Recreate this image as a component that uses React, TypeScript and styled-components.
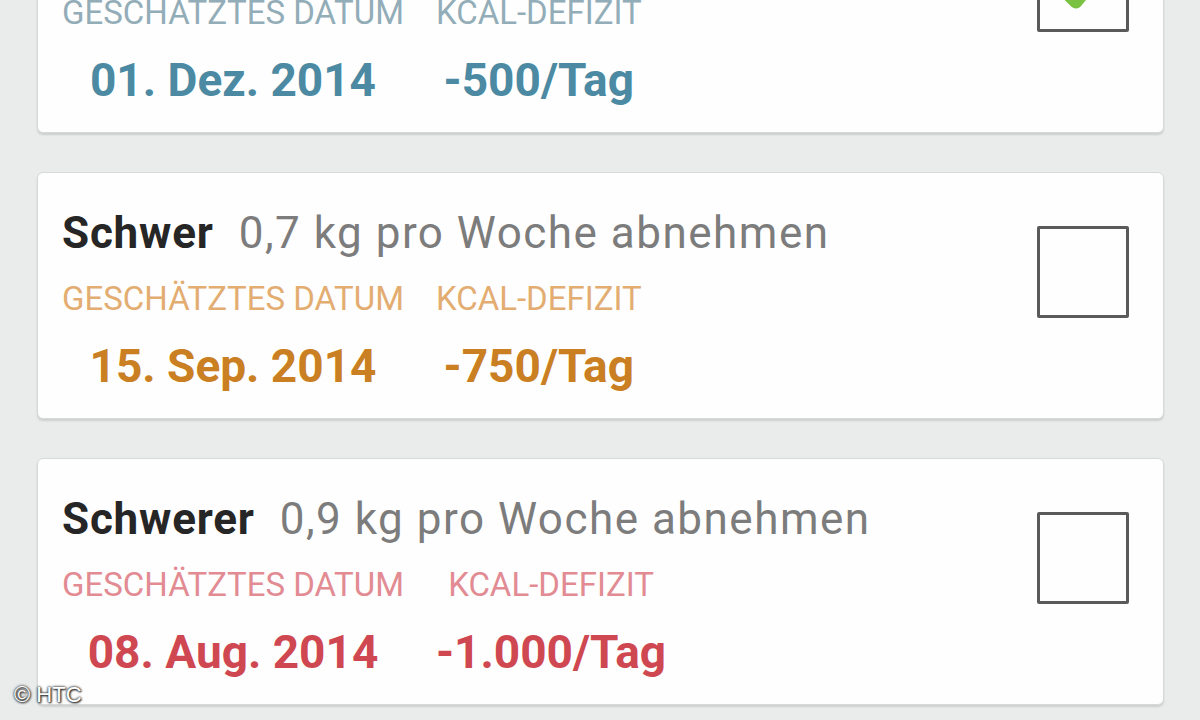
import styled, { createGlobalStyle } from "styled-components";

const GlobalStyle = createGlobalStyle`
    html, body {
        margin: 0;
        padding: 0;
        height: 720px;
        overflow: hidden;
        background: #e9eceb;
        font-family: Roboto, "Liberation Sans", Arial, sans-serif;
    }
`;

const Screen = styled.div`
    position: relative;
    width: 1200px;
    height: 720px;
    overflow: hidden;
    background: #e9eceb;
`;

const List = styled.div`
    display: flex;
    flex-direction: column;
    gap: 39px;
    width: 1127px;
    margin-left: 37px;
    margin-top: -114px;
`;

const Card = styled.div`
    display: flex;
    flex-direction: row;
    justify-content: space-between;
    align-items: flex-start;
    height: 247px;
    box-sizing: border-box;
    padding: 35px 34px 27px 24px;
    background: #fefefe;
    border: 1.5px solid #d5d9d9;
    border-radius: 6px;
    box-shadow: 0 2px 2px rgba(0, 0, 0, 0.12);
`;

const Content = styled.div`
    display: flex;
    flex-direction: column;
`;

const TitleRow = styled.div`
    display: flex;
    gap: 25px;
    height: 50px;
    line-height: 50px;
    font-size: 44px;
    white-space: nowrap;
`;

const Level = styled.span`
    font-weight: 700;
    color: #262626;
    letter-spacing: 0.8px;
`;

const Rate = styled.span`
    color: #7c7c7c;
    letter-spacing: 1.5px;
`;

const Stats = styled.div`
    display: flex;
    gap: 32px;
    margin-top: 21px;
`;

const Stat = styled.div`
    display: flex;
    flex-direction: column;
    align-items: center;
    gap: 20px;
`;

const Label = styled.div<{ $tone: string }>`
    font-size: 33px;
    line-height: 40px;
    height: 40px;
    color: ${(p) => p.$tone};
    white-space: nowrap;
`;

const Value = styled.div<{ $tone: string }>`
    font-size: 46px;
    line-height: 54px;
    height: 54px;
    font-weight: 700;
    color: ${(p) => p.$tone};
    white-space: nowrap;
`;

const Box = styled.div`
    position: relative;
    flex: none;
    width: 92px;
    height: 92px;
    margin-top: 18px;
    box-sizing: border-box;
    border: 3.5px solid #5a5a5a;
    border-radius: 2px;
`;

const Tick = styled.svg`
    position: absolute;
    left: -4px;
    top: -30px;
    overflow: visible;
`;

const Watermark = styled.div`
    position: absolute;
    left: 14px;
    bottom: 12px;
    font-family: "Liberation Sans", Arial, sans-serif;
    font-size: 22px;
    color: #ffffff;
    text-shadow: 0 0 2px #333, 0 0 3px #333, 1px 1px 2px #222;
`;

type Plan = {
    level: string;
    rate: string;
    date: string;
    deficit: string;
    label: string;
    value: string;
    checked?: boolean;
};

const plans: Plan[] = [
    { level: "Normal", rate: "0,5 kg pro Woche abnehmen", date: "01. Dez. 2014", deficit: "-500/Tag", label: "#93adb8", value: "#4b8aa2", checked: true },
    { level: "Schwer", rate: "0,7 kg pro Woche abnehmen", date: "15. Sep. 2014", deficit: "-750/Tag", label: "#e3ad72", value: "#c97f22" },
    { level: "Schwerer", rate: "0,9 kg pro Woche abnehmen", date: "08. Aug. 2014", deficit: "-1.000/Tag", label: "#e28b93", value: "#cf4851" },
];

const App = () => {
    return (
        <Screen>
            <GlobalStyle />
            <List>
                {plans.map((p) => (
                    <Card key={p.date}>
                        <Content>
                            <TitleRow>
                                <Level>{p.level}</Level>
                                <Rate>{p.rate}</Rate>
                            </TitleRow>
                            <Stats>
                                <Stat>
                                    <Label $tone={p.label}>GESCHÄTZTES DATUM</Label>
                                    <Value $tone={p.value}>{p.date}</Value>
                                </Stat>
                                <Stat>
                                    <Label $tone={p.label}>KCAL-DEFIZIT</Label>
                                    <Value $tone={p.value}>{p.deficit}</Value>
                                </Stat>
                            </Stats>
                        </Content>
                        <Box>
                            {p.checked && (
                                <Tick width="100" height="100" viewBox="0 0 100 100">
                                    <polyline
                                        points="12,62 40,89 112,0"
                                        fill="none"
                                        stroke="#7cc242"
                                        strokeWidth="13"
                                        strokeLinecap="round"
                                        strokeLinejoin="round"
                                    />
                                </Tick>
                            )}
                        </Box>
                    </Card>
                ))}
            </List>
            <Watermark>© HTC</Watermark>
        </Screen>
    );
};

export default App;
